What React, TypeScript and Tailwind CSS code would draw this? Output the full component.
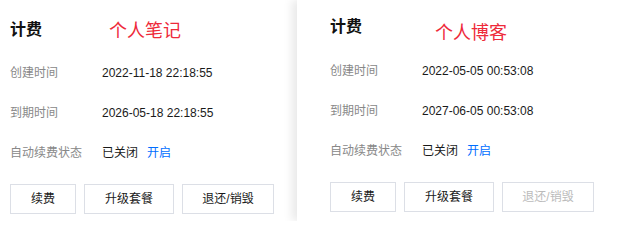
const font = "font-['Liberation_Sans','Noto_Sans_CJK_SC',sans-serif]";

type Billing = {
  note: string;
  created: string;
  expires: string;
  refundDisabled?: boolean;
};

function Row({ label, children }: { label: string; children: React.ReactNode }) {
  return (
    <div className="flex h-5 items-center text-[12px]">
      <span className="w-[92px] shrink-0 text-[#888]">{label}</span>
      <span className="text-[#1a1a1a]">{children}</span>
    </div>
  );
}

function Button({
  label,
  width,
  disabled = false,
}: {
  label: string;
  width: string;
  disabled?: boolean;
}) {
  return (
    <button
      className={`h-[30px] ${width} border border-[#dcdfe6] bg-white text-[12px] ${
        disabled ? "cursor-not-allowed text-[#bbb]" : "text-[#1a1a1a]"
      }`}
      disabled={disabled}
      type="button"
    >
      {label}
    </button>
  );
}

function BillingCard({ data, side }: { data: Billing; side: "left" | "right" }) {
  const isLeft = side === "left";

  return (
    <section
      className={`relative h-full bg-white ${
        isLeft
          ? "w-[297px] shrink-0 pl-[10px] pt-[18px]"
          : "z-10 flex-1 pl-[33px] pt-[15px] shadow-[-5px_0_9px_rgba(0,0,0,0.09)]"
      }`}
    >
      <h2 className="h-6 text-[16px] font-bold leading-6 text-[#111]">计费</h2>
      <span
        className={`absolute text-[18px] leading-6 text-[#ee2a3a] ${
          isLeft ? "left-[109px] top-[19px]" : "left-[138px] top-[21px]"
        }`}
      >
        {data.note}
      </span>

      <div className={`flex flex-col gap-5 ${isLeft ? "mt-[21px]" : "mt-[22px]"}`}>
        <Row label="创建时间">{data.created}</Row>
        <Row label="到期时间">{data.expires}</Row>
        <Row label="自动续费状态">
          已关闭<span className="ml-[9px] cursor-pointer text-[#006eff]">开启</span>
        </Row>
      </div>

      <div className="mt-[21px] flex gap-2">
        <Button label="续费" width="w-[66px]" />
        <Button label="升级套餐" width="w-[90px]" />
        <Button label="退还/销毁" width="w-[92px]" disabled={data.refundDisabled} />
      </div>
    </section>
  );
}

export default function App() {
  return (
    <div className={`flex h-[221px] w-[618px] overflow-hidden bg-white ${font}`}>
      <BillingCard
        data={{
          note: "个人笔记",
          created: "2022-11-18 22:18:55",
          expires: "2026-05-18 22:18:55",
        }}
        side="left"
      />
      <BillingCard
        data={{
          note: "个人博客",
          created: "2022-05-05 00:53:08",
          expires: "2027-06-05 00:53:08",
          refundDisabled: true,
        }}
        side="right"
      />
    </div>
  );
}
